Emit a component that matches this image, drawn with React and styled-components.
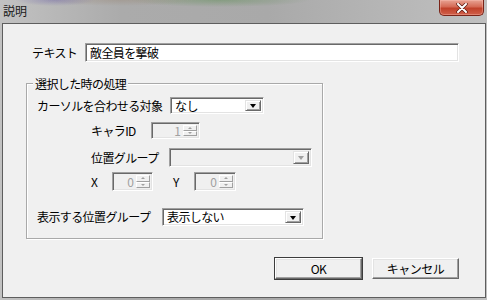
import React from 'react'
import styled, { createGlobalStyle } from 'styled-components'

const Global = createGlobalStyle`
  html, body {
    margin: 0;
    padding: 0;
    background: #b3b3b3;
  }
  body {
    font-family: "MS UI Gothic", "Noto Sans CJK JP", "Liberation Sans", sans-serif;
    font-size: 12px;
    color: #000;
  }
`

const Window = styled.div`
  width: 487px;
  height: 300px;
  display: flex;
  flex-direction: column;
  background:
    radial-gradient(ellipse 40px 6px at 55px 0px, rgba(110, 100, 170, 0.45), transparent),
    radial-gradient(ellipse 80px 6px at 120px 0px, rgba(150, 130, 110, 0.35), transparent),
    radial-gradient(ellipse 90px 7px at 220px 0px, rgba(90, 140, 80, 0.45), transparent),
    linear-gradient(to right, #c2c2c2, #ababab 25%, #a9a9a9 55%, #b6b6b6 80%, #c0c0c0);
`

const TitleBar = styled.div`
  height: 23px;
  display: flex;
  justify-content: space-between;
  align-items: flex-start;
  padding: 0 3px 0 3px;
`

const Title = styled.div`
  margin-top: 4px;
  font-size: 12px;
  line-height: 13px;
  color: #1a1a1a;
`

const CloseButton = styled.div`
  width: 45px;
  height: 16px;
  box-sizing: border-box;
  border: 1px solid #7a2418;
  border-top: none;
  border-radius: 0 0 5px 5px;
  background: linear-gradient(to bottom, #e8a393 0%, #d56a55 45%, #c0412a 55%, #d0604a 100%);
  box-shadow: inset 0 0 0 1px rgba(255, 200, 190, 0.35);
  display: flex;
  align-items: center;
  justify-content: center;
`

const Client = styled.div`
  flex: 1;
  margin: 0 1px 2px 2px;
  border: 1px solid #5e5e5e;
  background: #f0f0f0;
  padding: 19px 26px 0 23px;
  display: flex;
  flex-direction: column;
`

const Row = styled.div`
  display: flex;
  align-items: center;
  padding-left: ${p => p.$indent || 0}px;
  margin-top: ${p => p.$top || 0}px;
  height: ${p => p.$h || 17}px;
`

const Label = styled.span`
  width: ${p => p.$w}px;
  margin-left: ${p => p.$gap || 0}px;
  flex: none;
  letter-spacing: -0.6px;
  white-space: nowrap;
  line-height: 12px;
`

const Sunken = styled.div`
  box-sizing: border-box;
  width: ${p => p.$w}px;
  height: ${p => p.$h || 17}px;
  flex: none;
  border-top: 1px solid #a0a0a0;
  border-left: 1px solid #a0a0a0;
  border-right: 1px solid #fff;
  border-bottom: 1px solid #fff;
  box-shadow: inset 1px 1px 0 #696969, inset -1px -1px 0 #e3e3e3;
  background: ${p => (p.$disabled ? '#f0f0f0' : '#fff')};
  display: flex;
  align-items: center;
`

const FieldText = styled.span`
  flex: 1;
  padding-left: 4px;
  white-space: nowrap;
  letter-spacing: -0.6px;
  line-height: 12px;
`

const DropButton = styled.div`
  width: 16px;
  align-self: stretch;
  margin: 2px 2px 2px 0;
  box-sizing: border-box;
  background: #f0f0f0;
  border-top: 1px solid #e3e3e3;
  border-left: 1px solid #e3e3e3;
  border-right: 1px solid #696969;
  border-bottom: 1px solid #696969;
  box-shadow: inset 1px 1px 0 #fff, inset -1px -1px 0 #a0a0a0;
  display: flex;
  align-items: center;
  justify-content: center;

  &::after {
    content: '';
    border-left: 3.5px solid transparent;
    border-right: 3.5px solid transparent;
    border-top: 4px solid ${p => (p.$disabled ? '#a0a0a0' : '#000')};
    margin-top: 1px;
  }
`

const SpinValue = styled.span`
  flex: 1;
  text-align: right;
  padding-right: 2px;
  color: #a0a0a0;
  line-height: 12px;
`

const SpinButtons = styled.div`
  width: 14px;
  align-self: stretch;
  margin: 2px 2px 2px 0;
  display: flex;
  flex-direction: column;
`

const SpinHalf = styled.div`
  flex: 1;
  box-sizing: border-box;
  background: #f0f0f0;
  border-top: 1px solid #fff;
  border-left: 1px solid #fff;
  border-right: 1px solid #a0a0a0;
  border-bottom: 1px solid #a0a0a0;
  display: flex;
  align-items: center;
  justify-content: center;

  &::after {
    content: '';
    border-left: 2px solid transparent;
    border-right: 2px solid transparent;
    ${p =>
      p.$up
        ? 'border-bottom: 2px solid #a0a0a0;'
        : 'border-top: 2px solid #a0a0a0;'}
  }
`

const Group = styled.div`
  position: relative;
  width: 297px;
  box-sizing: border-box;
  margin-top: 21px;
  border: 1px solid #a9a9a9;
  box-shadow: 1px 1px 0 #fff, inset 1px 1px 0 #fff;
  padding: 13px 0 12px 0;
`

const Legend = styled.span`
  position: absolute;
  top: -7px;
  left: 6px;
  padding: 0 2px;
  background: #f0f0f0;
  letter-spacing: -0.6px;
  line-height: 13px;
`

const ButtonRow = styled.div`
  display: flex;
  justify-content: flex-end;
  gap: 10px;
  margin-top: 19px;
`

const PushButton = styled.button`
  width: 87px;
  height: 21px;
  box-sizing: border-box;
  padding: 0;
  font: inherit;
  font-size: 12px;
  background: #f0f0f0;
  border-top: 1px solid #fff;
  border-left: 1px solid #fff;
  border-right: 1px solid #696969;
  border-bottom: 1px solid #696969;
  box-shadow: inset -1px -1px 0 #a0a0a0, inset 1px 1px 0 #e3e3e3
    ${p => (p.$default ? ', 0 0 0 1px #3c3c3c' : '')};
  color: #000;
  letter-spacing: -0.5px;
`

const Combo = ({ w, h, value, disabled }) => (
  <Sunken $w={w} $h={h} $disabled={disabled}>
    <FieldText>{value}</FieldText>
    <DropButton $disabled={disabled} />
  </Sunken>
)

const Spinner = ({ w, h, value }) => (
  <Sunken $w={w} $h={h} $disabled>
    <SpinValue>{value}</SpinValue>
    <SpinButtons>
      <SpinHalf $up />
      <SpinHalf />
    </SpinButtons>
  </Sunken>
)

const CloseGlyph = () => (
  <svg width="12" height="10" viewBox="0 0 12 10">
    <path d="M2 1 L10 9 M10 1 L2 9" stroke="#5a1a10" strokeWidth="3.4" strokeLinecap="round" />
    <path d="M2 1 L10 9 M10 1 L2 9" stroke="#fff" strokeWidth="2" strokeLinecap="round" />
  </svg>
)

export default function App() {
  return (
    <>
      <Global />
      <Window>
        <TitleBar>
          <Title>説明</Title>
          <CloseButton>
            <CloseGlyph />
          </CloseButton>
        </TitleBar>
        <Client>
          <Row $indent={6} $h={19}>
            <Label $w={53}>テキスト</Label>
            <Sunken $w={374} $h={19}>
              <FieldText>敵全員を撃破</FieldText>
            </Sunken>
          </Row>

          <Group>
            <Legend>選択した時の処理</Legend>
            <Row $indent={10} $h={17}>
              <Label $w={133}>カーソルを合わせる対象</Label>
              <Combo w={94} h={17} value="なし" />
            </Row>
            <Row $indent={64} $top={8} $h={17}>
              <Label $w={60}>キャラID</Label>
              <Spinner w={49} h={17} value="1" />
            </Row>
            <Row $indent={64} $top={9} $h={19}>
              <Label $w={78}>位置グループ</Label>
              <Combo w={143} h={19} disabled />
            </Row>
            <Row $indent={64} $top={5} $h={19}>
              <Label $w={21}>X</Label>
              <Spinner w={41} h={19} value="0" />
              <Label $w={21} $gap={20}>Y</Label>
              <Spinner w={42} h={19} value="0" />
            </Row>
            <Row $indent={10} $top={17} $h={18}>
              <Label $w={125}>表示する位置グループ</Label>
              <Combo w={142} h={18} value="表示しない" />
            </Row>
          </Group>

          <ButtonRow>
            <PushButton $default>OK</PushButton>
            <PushButton>キャンセル</PushButton>
          </ButtonRow>
        </Client>
      </Window>
    </>
  )
}
